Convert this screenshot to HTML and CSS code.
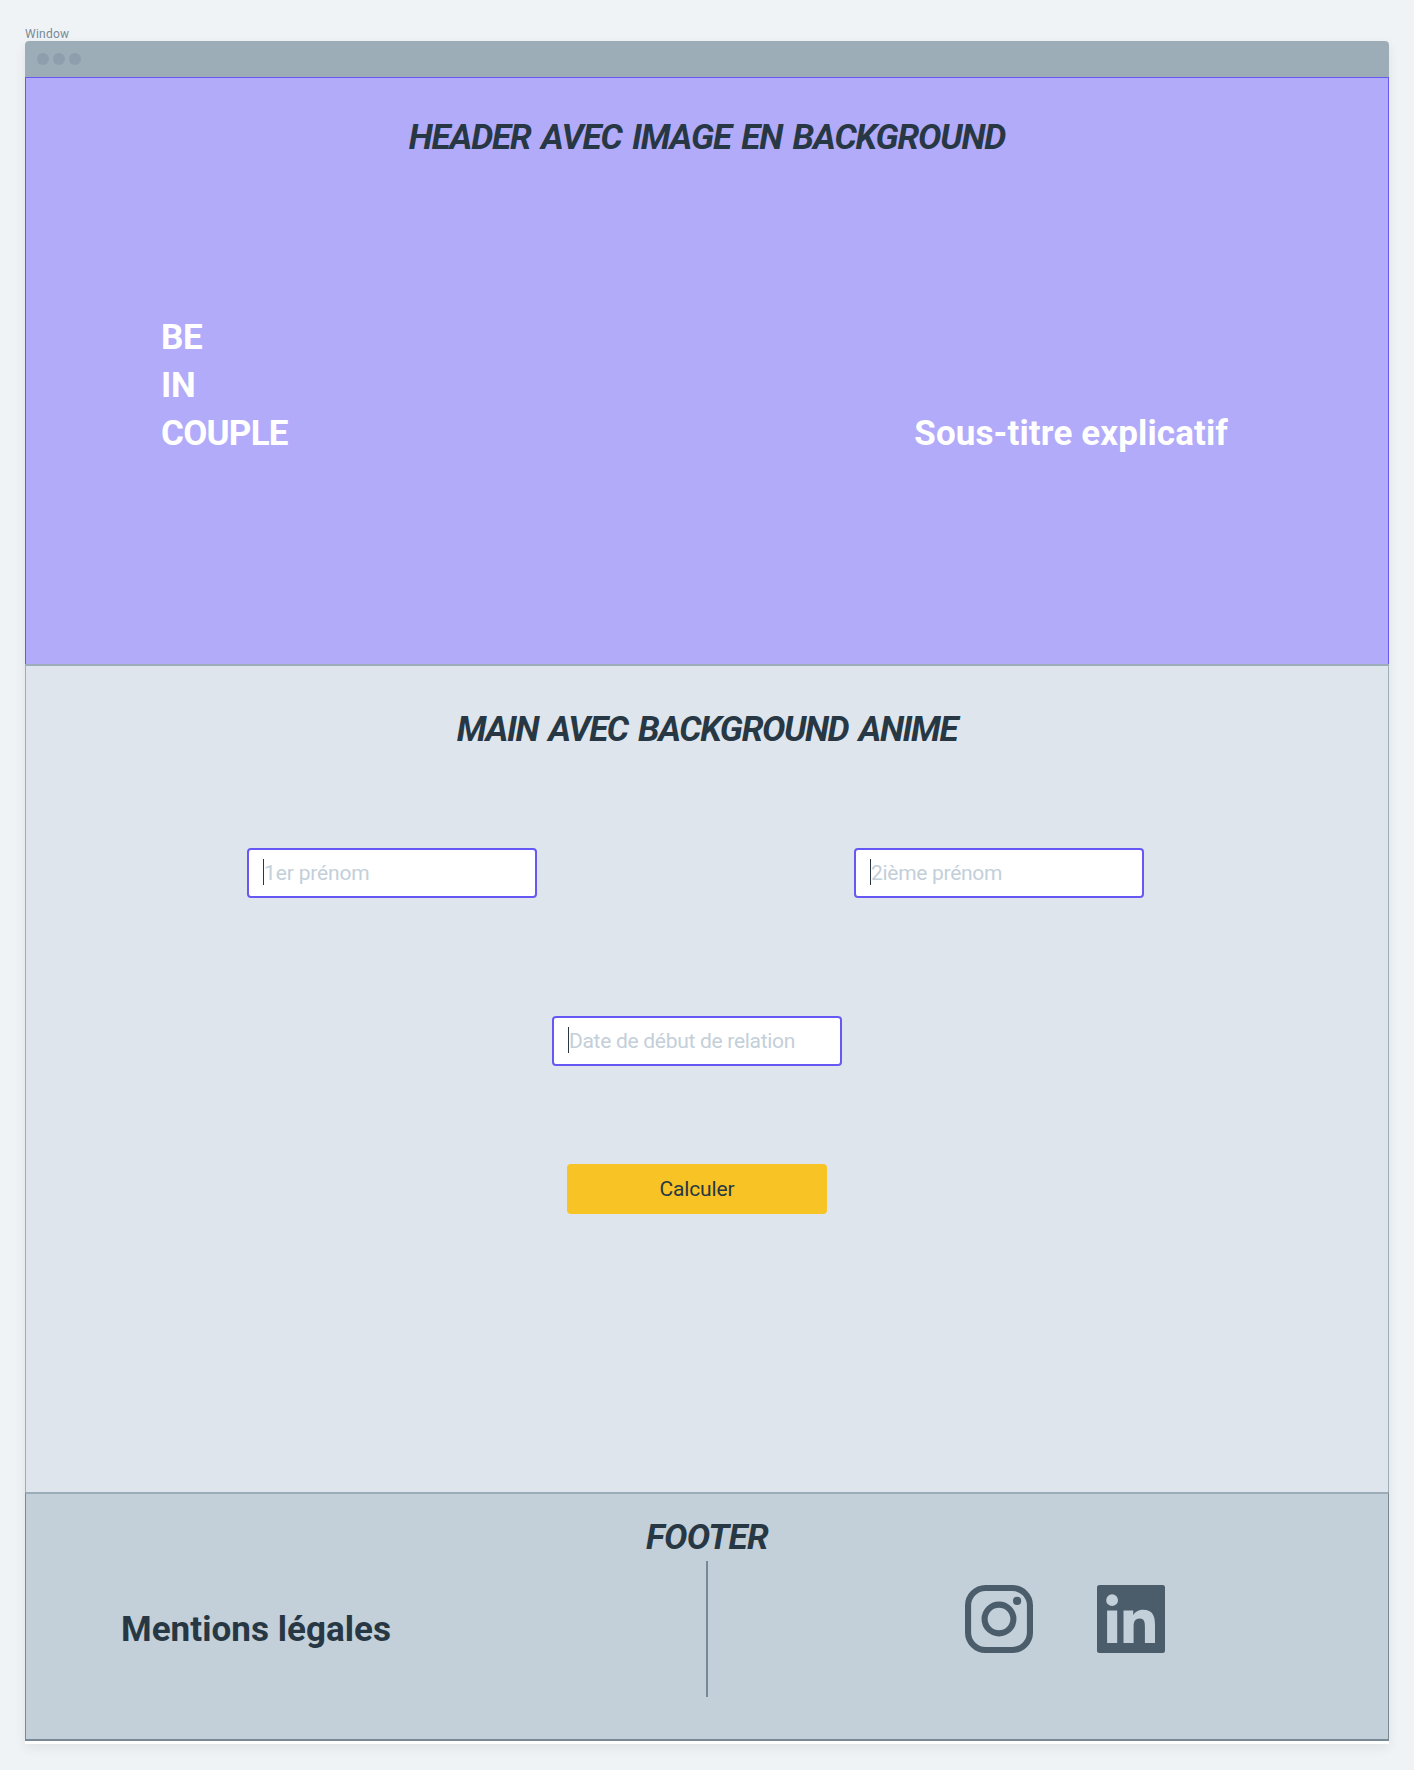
FILE: index.html
```html
<!DOCTYPE html>
<html lang="fr">
<head>
  <meta charset="utf-8">
  <title>Be In Couple</title>
  <link rel="stylesheet" href="styles.css">
</head>
<body>
  <div class="label">Window</div>
  <div class="window">
    <div class="titlebar"><i class="dot"></i><i class="dot"></i><i class="dot"></i></div>

    <header class="header">
      <h1 class="section-title">HEADER AVEC IMAGE EN BACKGROUND</h1>
      <div class="hero">
        <div class="brand">
          <div class="brand-short">BE</div>
          <div class="brand-short">IN</div>
          <div>COUPLE</div>
        </div>
        <div class="subtitle">Sous-titre explicatif</div>
      </div>
    </header>

    <main class="main">
      <h2 class="section-title title-main">MAIN AVEC BACKGROUND ANIME</h2>
      <div class="names">
        <div class="field"><span class="caret"></span><span class="hint hint-first">1er prénom</span></div>
        <div class="field"><span class="caret"></span><span class="hint">2ième prénom</span></div>
      </div>
      <div class="actions">
        <div class="field"><span class="caret"></span><span class="hint">Date de début de relation</span></div>
        <button class="button" type="button">Calculer</button>
      </div>
    </main>

    <footer class="footer">
      <h2 class="section-title title-footer">FOOTER</h2>
      <div class="footer-row">
        <div class="legal">Mentions légales</div>
        <div class="divider"></div>
        <div class="social">
          <svg class="icon" viewBox="0 0 68 68">
            <rect x="3.05" y="3.05" width="61.9" height="61.9" rx="17.5" fill="none" stroke="currentColor" stroke-width="6.1"/>
            <circle cx="34" cy="34" r="14.4" fill="none" stroke="currentColor" stroke-width="6.1"/>
            <circle cx="52.1" cy="15.9" r="4.1" fill="currentColor"/>
          </svg>
          <svg class="icon" viewBox="0 0 68 68">
            <path fill="currentColor" fill-rule="evenodd" d="M2.5 0h63A2.5 2.5 0 0 1 68 2.5v63a2.5 2.5 0 0 1-2.5 2.500h-63A2.500 2.500 0 0 1 0 65.500v-63A2.500 2.500 0 0 1 2.500 0ZM15.100 9.300a5.900 5.900 0 1 0 0 11.800a5.900 5.900 0 1 0 0-11.800ZM10.100 25.500v32.500h10.100v-32.500ZM26.500 25.500v32.500h10.100v-16c0-4.300.8-8.400 6.100-8.400c5.200 0 5.200 4.900 5.200 8.600v15.800h10.100v-17.800c0-8.800-1.900-15.500-12.100-15.500c-4.900 0-8.200 2.700-9.500 5.200h-.2v-4.400Z"/>
          </svg>
        </div>
      </div>
    </footer>
  </div>
</body>
</html>
```
FILE: styles.css
```css
* {
  box-sizing: border-box;
}

body {
  margin: 0;
  padding: 25px 25px 26px;
  background: #eff3f6;
  color: #273844;
  font-family: Roboto, "Liberation Sans", sans-serif;
}

.label {
  height: 16px;
  font-size: 12px;
  line-height: 19px;
  letter-spacing: 0.25px;
  color: #778995;
}

.window {
  height: 1703px;
  background: #fff;
  border-radius: 4px 4px 0 0;
  box-shadow: 0 4px 12px rgba(0, 0, 0, 0.07);
}

.titlebar {
  display: flex;
  align-items: center;
  gap: 4px;
  height: 36px;
  padding-left: 12px;
  background: #9dadb8;
  border-radius: 4px 4px 0 0;
}

.dot {
  width: 12px;
  height: 12px;
  border-radius: 50%;
  background: #8e9eac;
}

.section-title {
  margin: 0;
  font-size: 35px;
  font-style: italic;
  font-weight: 700;
  line-height: 48px;
  letter-spacing: -1.15px;
  word-spacing: 3px;
  text-align: center;
}

.title-main {
  letter-spacing: -1.38px;
}

.title-footer {
  margin-bottom: -1px;
  letter-spacing: -0.7px;
}

.header {
  height: 587px;
  padding-top: 36px;
  background: #b2abfa;
  border: 1px solid #6558f5;
  border-bottom: 0;
}

.hero {
  display: flex;
  justify-content: space-between;
  align-items: flex-end;
  margin-top: 152px;
  padding: 0 160px 0 135px;
  color: #fff;
  font-size: 35px;
  font-weight: 700;
  line-height: 48px;
}

.brand {
  letter-spacing: -0.75px;
}

.brand-short {
  letter-spacing: -0.3px;
}

.subtitle {
  letter-spacing: 0.12px;
}

.main {
  height: 828px;
  padding-top: 40px;
  background: #dee5ed;
  border: 1px solid #9cacb9;
  border-top-width: 2px;
  border-bottom: 0;
}

.names {
  display: flex;
  gap: 317px;
  margin-top: 94px;
  padding-left: 221px;
}

.field {
  display: flex;
  align-items: center;
  width: 290px;
  height: 50px;
  padding-left: 14px;
  background: #fff;
  border: 2px solid #6558f5;
  border-radius: 4px;
}

.caret {
  width: 1px;
  height: 26px;
  margin-bottom: 2px;
  background: #273844;
}

.hint {
  color: #c3cfd9;
  font-size: 21px;
  line-height: 28px;
  letter-spacing: -0.29px;
}

.hint-first {
  letter-spacing: -0.15px;
}

.actions {
  display: flex;
  flex-direction: column;
  align-items: center;
  gap: 98px;
  width: 290px;
  margin: 118px 0 0 526px;
}

.button {
  width: 260px;
  height: 50px;
  padding: 0;
  border: 0;
  border-radius: 4px;
  background: #f8c325;
  color: #273844;
  font: 400 21px/50px Roboto, "Liberation Sans", sans-serif;
  letter-spacing: -0.15px;
}

.footer {
  height: 249px;
  padding-top: 20px;
  background: #c3cfd9;
  border: 1px solid #788996;
  border-top: 2px solid #9cacb9;
  border-bottom-width: 2px;
}

.footer-row {
  display: grid;
  grid-template-columns: 1fr 2px 1fr;
  height: 136px;
}

.legal {
  padding: 45px 0 0 95px;
  font-size: 35px;
  font-weight: 700;
  line-height: 48px;
  letter-spacing: 0.04px;
}

.divider {
  background: #788996;
}

.social {
  display: flex;
  gap: 64px;
  padding: 24px 0 0 257px;
  color: #4b5c6a;
}

.icon {
  width: 68px;
  height: 68px;
}
```
